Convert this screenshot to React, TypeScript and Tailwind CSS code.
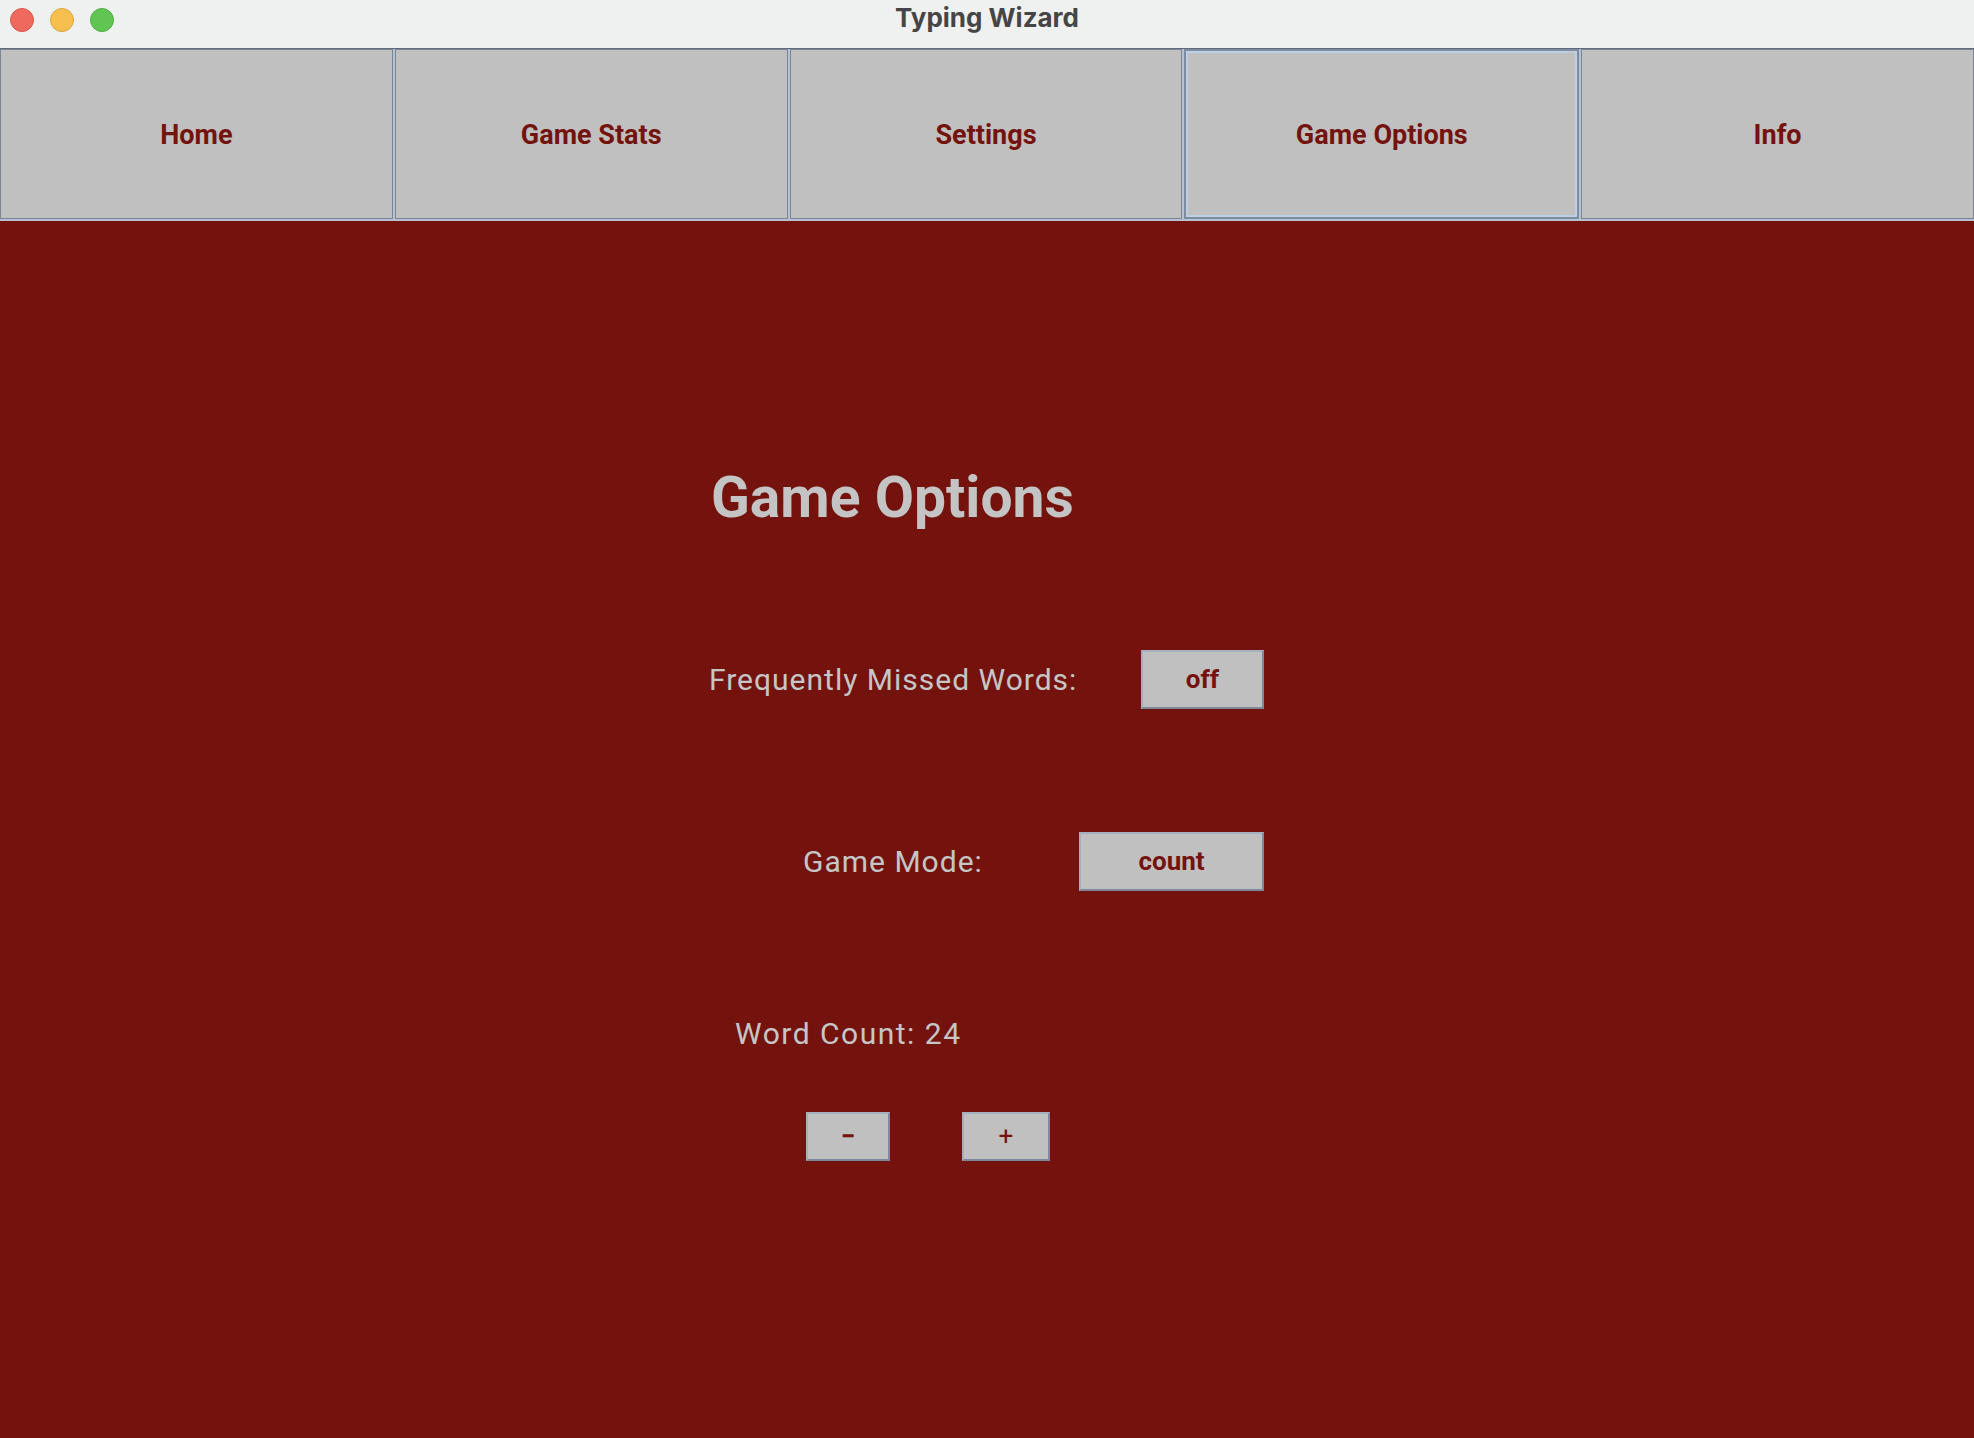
import { useState } from 'react'

const tabs = ['Home', 'Game Stats', 'Settings', 'Game Options', 'Info']

// boutons gris façon Swing/Aqua
const grayBtn =
  'flex items-center justify-center bg-[#c0c0c0] border-2 border-t-[#a4afbf] border-l-[#a4afbf] border-b-[#7d889a] border-r-[#7d889a] text-[#74130e] font-bold'

function TitleBar() {
  return (
    <div className="relative h-[48px] bg-[#eff1f0] flex items-start justify-center pt-[5px]">
      <div className="absolute left-[10px] top-[8px] flex gap-[16px]">
        <span className="w-[24px] h-[24px] rounded-full bg-[#ee6a5f] border border-[#d8584e]" />
        <span className="w-[24px] h-[24px] rounded-full bg-[#f6bf4f] border border-[#dda63b]" />
        <span className="w-[24px] h-[24px] rounded-full bg-[#61c554] border border-[#4fae44]" />
      </div>
      <span className="text-[26px] font-bold text-[#454545] leading-none" style={{ fontFamily: 'Inter, "Liberation Sans", sans-serif' }}>
        Typing Wizard
      </span>
    </div>
  )
}

function NavBar({ active, onSelect }: { active: string; onSelect: (t: string) => void }) {
  return (
    <div className="flex h-[173px] gap-[2px] bg-[#b4c2d2] border-t border-[#5f6b7d] pb-[2px]">
      {tabs.map(t => (
        <button
          key={t}
          onClick={() => onSelect(t)}
          className={
            t === active
              ? 'flex-1 flex items-center justify-center pt-[2px] bg-[#c0c0c0] border-2 border-[#7f8ca0] shadow-[inset_0_0_0_2px_#bccfe3] text-[#74130e] font-bold text-[27px]'
              : 'flex-1 flex items-center justify-center pt-[2px] bg-[#c0c0c0] border border-[#7b8595] text-[#74130e] font-bold text-[27px]'
          }
        >
          {t}
        </button>
      ))}
    </div>
  )
}

export default function App() {
  const [active, setActive] = useState('Game Options')
  const [missed, setMissed] = useState(false)
  const [mode, setMode] = useState('count')
  const [count, setCount] = useState(24)

  return (
    <div className="w-[1974px] h-[1438px] flex flex-col bg-[#74130e] overflow-hidden" style={{ fontFamily: 'Roboto, "Open Sans", sans-serif' }}>
      <TitleBar />
      <NavBar active={active} onSelect={setActive} />

      <div className="flex-1 flex flex-col text-[#c6c6c6]">
        <div className="mt-[246px] h-[60px] flex items-center pl-[711px]">
          <h1 className="text-[57px] font-bold leading-none text-[#c4c4c4]">Game Options</h1>
        </div>

        <div className="mt-[123px] h-[59px] flex items-center pl-[709px]">
          <span className="w-[432px] text-[30px] tracking-[1px]">Frequently Missed Words:</span>
          <button onClick={() => setMissed(!missed)} className={`${grayBtn} w-[123px] h-[59px] text-[26px]`}>
            {missed ? 'on' : 'off'}
          </button>
        </div>

        <div className="mt-[123px] h-[59px] flex items-center pl-[803px]">
          <span className="w-[276px] text-[30px] tracking-[1px]">Game Mode:</span>
          <button onClick={() => setMode(mode === 'count' ? 'time' : 'count')} className={`${grayBtn} w-[185px] h-[59px] text-[26px]`}>
            {mode}
          </button>
        </div>

        <div className="mt-[122px] h-[40px] flex items-center pl-[735px]">
          <span className="text-[30px] tracking-[1.5px]">Word Count: {count}</span>
        </div>

        <div className="mt-[59px] h-[49px] flex items-center pl-[806px]">
          <button onClick={() => setCount(c => Math.max(1, c - 1))} className={`${grayBtn} w-[84px] h-[49px] text-[26px]`}>
            −
          </button>
          <button onClick={() => setCount(c => c + 1)} className={`${grayBtn} ml-[72px] w-[88px] h-[49px] text-[26px] font-normal`}>
            +
          </button>
        </div>
      </div>
    </div>
  )
}
